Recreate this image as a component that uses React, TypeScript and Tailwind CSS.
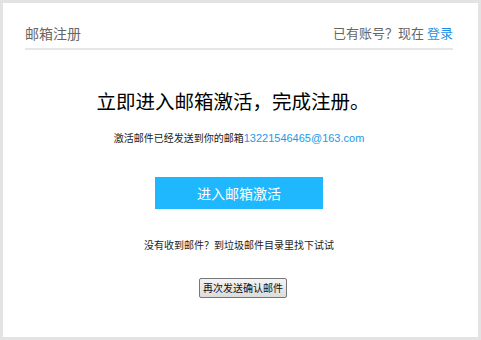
import React from "react"

const cjk = "font-['Noto_Sans_CJK_SC','Noto_Sans',sans-serif]"

const App: React.FC = () => {
  return (
    <div className={`w-[481px] h-[340px] bg-[#e3e3e3] p-[3px] ${cjk}`}>
      <div className="h-full bg-white pl-[22px] pr-[25px]">
        <div className="flex items-end justify-between pt-[20px] pb-[5px] border-b-2 border-[#e6e6e6]">
          <span className="text-[14px] leading-[20px] text-[#666]">邮箱注册</span>
          <span className="text-[13px] leading-[20px] text-[#666]">
            已有账号？现在 <a className="text-[#1e90e8]">登录</a>
          </span>
        </div>
        <div className="flex flex-col items-center">
          <h1 className="mt-[38px] mr-[12px] text-[19.5px] leading-[26px] text-black">立即进入邮箱激活，完成注册。</h1>
          <p className="mt-[16px] text-[10px] leading-[16px] text-[#222]">
            激活邮件已经发送到你的邮箱<span className="text-[#1b9ae6] text-[11px] font-['Liberation_Sans',Arial,sans-serif]">13221546465@163.com</span>
          </p>
          <button className="mt-[31px] w-[168px] h-[32px] bg-[#1fb8ff] text-white text-[14px]">进入邮箱激活</button>
          <p className="mt-[29px] text-[10px] leading-[14px] text-[#222]">没有收到邮件？到垃圾邮件目录里找下试试</p>
          <button className="mt-[26px] ml-[8px] h-[20px] px-[3px] border border-[#777] rounded-[2px] bg-gradient-to-b from-[#f4f4f4] to-[#dcdcdc] text-[10px] leading-[18px] text-[#111]">
            再次发送确认邮件
          </button>
        </div>
      </div>
    </div>
  )
}

export default App
